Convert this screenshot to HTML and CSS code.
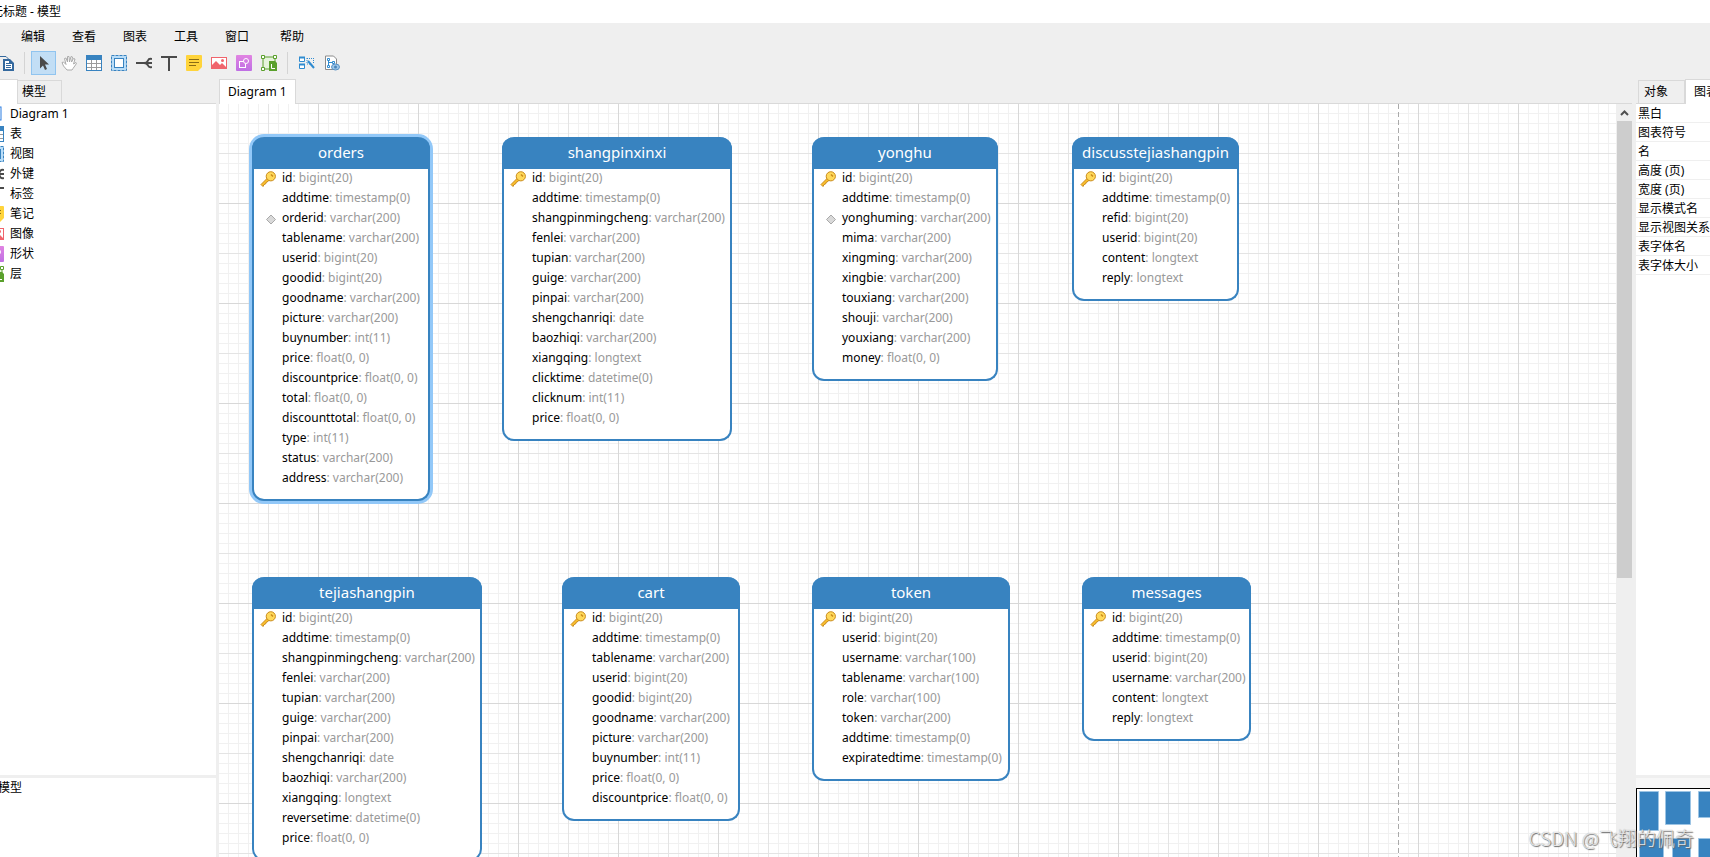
FILE: index.html
```html
<!DOCTYPE html>
<html lang="zh-CN">
<head>
<meta charset="utf-8">
<title>无标题 - 模型</title>
<link rel="stylesheet" href="styles.css">
</head>
<body>
<svg class="defs" aria-hidden="true">
  <defs>
    <linearGradient id="violet" x2="0" y2="1"><stop stop-color="#e184e2"/><stop offset="1" stop-color="#bf6fe4"/></linearGradient>
    <symbol id="i-copy" viewBox="0 0 16 16"><path d="M0 1.500h8l3 3" fill="none" stroke="#34699e"/><path d="M5 4h7l4 4v8H5z" fill="#34699e"/><path d="M7 6h4v3h3v5H7z" fill="#fff"/><path d="M8 8.500h3M8 10.500h5M8 12.500h5" stroke="#34699e"/></symbol>
    <symbol id="i-arrow" viewBox="0 0 16 16"><path d="M4 1l9 8.500H9l2 4.500-2 1-2-4.500-3 3z" fill="#4a4a4a"/></symbol>
    <symbol id="i-hand" viewBox="0 0 16 16"><path d="M6 15L2.500 11 1 7.500l1.500-.5L5 9.500 3.500 3.500 5 3l1.500 4L6.500 1.500H8L8.500 7 10 1.500l1.500.5L10.500 7l2-3.500 1.500.5-1.500 5L15 7.500l.5 1-3.500 5-1 1.500z" fill="#fff" stroke="#ababab"/></symbol>
    <symbol id="i-table" viewBox="0 0 16 16"><rect x=".5" y=".5" width="15" height="15" fill="#fff" stroke="#3883c0"/><path d="M0 0h16v5H0z" fill="#3883c0"/><path d="M5.500 5v10M10.500 5v10M1 8.500h14M1 12.500h14" stroke="#9b9b9b"/></symbol>
    <symbol id="i-view" viewBox="0 0 16 16"><rect x=".5" y=".5" width="15" height="15" fill="#b9ddf8" stroke="#3883c0" stroke-dasharray="3 1"/><rect x="3.500" y="3.500" width="9" height="9" fill="#fff" stroke="#3883c0"/></symbol>
    <symbol id="i-key" viewBox="0 0 16 16"><path d="M0 8h16M8 8q3 0 4-2.500T16 4M8 8q3 0 4 2.500T16 12" fill="none" stroke="#4a4a4a" stroke-width="2"/></symbol>
    <symbol id="i-text" viewBox="0 0 16 16"><path d="M0 2h16M8 1v15" stroke="#4a4a4a" stroke-width="2"/></symbol>
    <symbol id="i-note" viewBox="0 0 16 16"><path d="M1 0h14q1 0 1 1v11l-4 4H1q-1 0-1-1V1q0-1 1-1z" fill="#ffd43b"/><path d="M3 4.500h10M3 7.500h10M3 10.500h7" stroke="#8a6c15"/></symbol>
    <symbol id="i-image" viewBox="0 0 16 16"><rect x=".5" y="2.500" width="15" height="11" fill="#fff" stroke="#f0646c"/><path d="M1 13V10l4-4 4 4 2-2 4 4v1z" fill="#f0646c"/><circle cx="11.500" cy="5.500" r="1.500" fill="#f0646c"/></symbol>
    <symbol id="i-shape" viewBox="0 0 16 16"><rect width="16" height="16" rx="1" fill="url(#violet)"/><rect x="3.500" y="6.500" width="6" height="6" fill="none" stroke="#fff"/><circle cx="10" cy="6" r="2.500" fill="#d27be3" stroke="#fff"/></symbol>
    <symbol id="i-layer" viewBox="0 0 16 16"><path d="M2 2h12v12H2z" fill="#e6f3dc" stroke="#5aa02c"/><path d="M.5.5h3v3h-3zM12.500.5h3v3h-3zM.5 12.500h3v3h-3z" fill="#fff" stroke="#5aa02c"/><path d="M8 6h6l2 2v8H8z" fill="#5aa02c"/><path d="M10.500 9v4.500H14" fill="none" stroke="#fff"/></symbol>
    <symbol id="i-auto" viewBox="0 0 16 16"><path d="M.5 2.500h5v4h-5zM.5 9.500h5v4h-5z" fill="#fff" stroke="#2f8bd0"/><path d="M0 2.500h6M0 9.500h6" stroke="#2f8bd0" stroke-width="2"/><path d="M8 3.500h7M8 3v6M14.500 3v6M8 9h3" stroke="#2f8bd0" fill="none" stroke-dasharray="1 1"/><path d="M9 6l6 7" stroke="#2f8bd0" stroke-width="2"/></symbol>
    <symbol id="i-report" viewBox="0 0 16 16"><path d="M1.500 1h8l3 3v10.500h-11z" fill="#fff" stroke="#8b8b8b"/><path d="M3.500 3.500h2v2h-2zM3.500 10.500h2v2h-2zM8.500 6.500h2v2h-2zM4.500 5.500v5M4.500 7.500h4" fill="none" stroke="#2f8bd0"/><ellipse cx="11.500" cy="12" rx="4" ry="3" fill="#9cc7ea" stroke="#5b93c4"/><circle cx="11.500" cy="12" r="1.500" fill="#4b86bb"/></symbol>
    <symbol id="i-diagram" viewBox="0 0 16 16"><rect x="1" y="1" width="12" height="13" fill="#fff" stroke="#2a7de1"/></symbol>
    <symbol id="i-pk" viewBox="0 0 16 16"><path d="M1 13.500L7.500 7l2 2L8 10.500 6.500 11 5.500 13 4 13.500 3 15.500z" fill="#fbc02d" stroke="#c98a1b"/><circle cx="10.800" cy="5.300" r="4.600" fill="#ffd95a" stroke="#c98a1b"/><path d="M11 3.500l2 2" stroke="#c98a1b" stroke-width="1.500"/></symbol>
    <symbol id="i-index" viewBox="0 0 16 16"><path d="M11 4l4.500 4.500L11 13 6.500 8.500z" fill="#d9d9d9" stroke="#a9a9a9"/></symbol>
  </defs>
</svg>
<div class="app">
  <header class="title-bar">无标题 - 模型</header>
  <nav class="menu-bar" id="menus"></nav>
  <div class="tool-bar" id="tools"></div>
  <main class="workspace">
    <aside class="side">
      <div class="tabs"><button class="tab active" aria-label="图表"></button><button class="tab model">模型</button></div>
      <ul class="tree" id="tree"></ul>
      <div class="side-info">模型</div>
    </aside>
    <section class="center">
      <div class="tabs"><button class="tab active">Diagram 1</button></div>
      <div class="canvas-row">
        <div class="canvas" id="canvas"><div class="page-edge"></div></div>
        <div class="scrollbar"><button class="scroll-up" aria-label="Scroll up"><svg viewBox="0 0 15 17"><path d="M4 11l3.500-3.500L11 11" fill="none" stroke="#505050" stroke-width="2"/></svg></button><div class="thumb"></div></div>
      </div>
    </section>
    <aside class="props">
      <div class="tabs"><button class="tab">对象</button><button class="tab active">图表</button></div>
      <ul class="prop-list">
        <li>黑白</li><li>图表符号</li><li>名</li><li>高度 (页)</li><li>宽度 (页)</li><li>显示模式名</li><li>显示视图关系</li><li>表字体名</li><li>表字体大小</li>
      </ul>
      <div class="overview-pane"><div class="overview">
        <svg width="100" height="80"><g fill="#3883c0" stroke="#9cc4e4"><path d="M2.500 2.500h19v39h-19zM28.500 2.500h25v33h-25zM61.500 2.500h20v26h-20zM2.500 49.500h24v30h-24zM35.500 49.500h18v30h-18zM61.500 49.500h20v30h-20z"/></g></svg>
      </div></div>
    </aside>
  </main>
  <div class="watermark">CSDN @飞翔的佩奇</div>
</div>
<script src="app.js"></script>
</body>
</html>
```
FILE: styles.css
```css
* { box-sizing: border-box; }
body {
  margin: 0;
  background: #efefef;
  color: #000;
  font: 12px/20px "Noto Sans", "Noto Sans CJK SC", sans-serif;
}
button { font: inherit; color: inherit; border: 0; background: none; padding: 0; }
ul { list-style: none; margin: 0; padding: 0; }
svg { display: block; }
.defs { position: absolute; width: 0; height: 0; }
.app { height: 100vh; display: flex; flex-direction: column; overflow: hidden; position: relative; }
.title-bar { height: 23px; background: #fff; line-height: 23px; text-indent: -9px; white-space: nowrap; }
.menu-bar { height: 27px; padding-left: 21px; display: flex; align-items: center; gap: 27px; }
.menu-bar button:last-child { margin-left: 4px; }
.tool-bar { height: 29px; padding-top: 1px; display: flex; align-items: flex-start; overflow: hidden; }
.tool { width: 25px; height: 24px; flex: none; display: grid; place-items: center; }
.tool svg, .tree svg { width: 16px; height: 16px; }
.tool.first { margin-left: -7px; }
.tool.selected { background: #c2def5; border: 1px solid #90c4ef; }
.sep { width: 1px; height: 22px; background: #d4d4d4; margin: 1px 6px; flex: none; }
.workspace { flex: 1; min-height: 0; display: flex; }
.tabs { height: 25px; display: flex; align-items: flex-end; border-bottom: 1px solid #d9d9d9; flex: none; }
.tab { height: 23px; line-height: 22px; padding: 0 16px 0 5px; border: 1px solid #d9d9d9; border-bottom: 0; flex: none; white-space: nowrap; }
.tab.active { height: 25px; line-height: 20px; background: #fff; padding: 0 8px; margin-bottom: -1px; }
.side { width: 216px; flex: none; display: flex; flex-direction: column; }
.side .tab.active { width: 18px; border-left: 0; }
.side .tab.model { border-left: 0; padding: 0 15px 0 4px; }
.tree { flex: 1; background: #fff; }
.tree li { display: flex; gap: 6px; height: 20px; align-items: center; margin-left: -12px; }
.side-info { height: 79px; flex: none; margin-top: 3px; background: #fff; text-indent: -2px; }
.center { flex: 1; min-width: 0; margin-left: 3px; display: flex; flex-direction: column; }
.center .tabs { margin-right: 1px; }
.canvas-row { flex: 1; min-height: 0; display: flex; gap: 1px; }
.canvas {
  flex: 1; position: relative; overflow: hidden; background-color: #fff;
  background-image:
    linear-gradient(90deg, #d8d8d8 1px, transparent 1px), linear-gradient(#d8d8d8 1px, transparent 1px),
    linear-gradient(90deg, #e4e4e4 1px, transparent 1px), linear-gradient(#e4e4e4 1px, transparent 1px),
    linear-gradient(90deg, #f1f1f1 1px, transparent 1px), linear-gradient(#f1f1f1 1px, transparent 1px);
  background-size: 100px 100px, 100px 100px, 50px 50px, 50px 50px, 10px 10px, 10px 10px;
  background-position: 99px 99px;
}
.page-edge {
  position: absolute; top: 0; bottom: 0; left: 1179px; width: 1px;
  background: repeating-linear-gradient(#aaa 0 5px, #fff 5px 8px);
}
.entity {
  position: absolute; background: #fff; border: 2px solid #3883c0; border-top: 0;
  border-radius: 12px; padding-bottom: 10px; white-space: nowrap;
}
.entity.selected { box-shadow: 0 0 0 3px #92c8f8; }
.entity h2 {
  margin: 0 -2px; height: 32px; line-height: 31px; text-align: center; font-size: 15px; font-weight: 400;
  color: #fff; background: #3883c0; border-radius: 12px 12px 0 0;
}
.field { display: flex; height: 20px; line-height: 18px; }
.field svg { width: 16px; height: 16px; margin: 2px 6px 0; flex: none; }
.field .type { color: #999; white-space: pre; }
.scrollbar { width: 15px; flex: none; background: #efefef; margin-right: 1px; }
.scroll-up { display: block; width: 15px; height: 17px; }
.thumb { height: 457px; background: #cdcdcd; }
.props { width: 74px; flex: none; margin-left: 3px; overflow: hidden; display: flex; flex-direction: column; }
.props .tabs { padding-left: 2px; }
.prop-list { flex: 1; background: #fff; white-space: nowrap; }
.prop-list li { height: 19px; line-height: 20px; padding-left: 2px; border-bottom: 1px solid #efefef; }
.overview-pane { flex: none; margin-top: 3px; padding-top: 10px; background: #f7f7f7; }
.overview { height: 69px; background: #fff; border: 1px solid #000; border-width: 1px 0 0 1px; overflow: hidden; }
.watermark {
  position: absolute; right: 16px; bottom: 7px; font: 19px/24px "Noto Sans CJK SC", sans-serif; font-weight: 300;
  color: #fffc; text-shadow: 1px 1px 1px #666, 0 0 1px #888;
}
```
FILE: app.js
```js
const icon = name => `<svg><use href="#i-${name}"/></svg>`;

document.getElementById("menus").innerHTML =
  ["编辑", "查看", "图表", "工具", "窗口", "帮助"].map(m => `<button>${m}</button>`).join("");

document.getElementById("tools").innerHTML =
  ["copy", "|", "arrow", "hand", "table", "view", "key", "text", "note", "image", "shape", "layer", "|", "auto", "report"]
    .map(t => t === "|" ? '<span class="sep"></span>'
      : `<button class="tool ${t === "copy" ? "first" : t === "arrow" ? "selected" : ""}" aria-label="${t}">${icon(t)}</button>`).join("");

document.getElementById("tree").innerHTML =
  [["diagram", "Diagram 1"], ["table", "表"], ["view", "视图"], ["key", "外键"], ["text", "标签"],
   ["note", "笔记"], ["image", "图像"], ["shape", "形状"], ["layer", "层"]]
    .map(([i, t]) => `<li>${icon(i)}<span>${t}</span></li>`).join("");

const v = "varchar(200)", big = "bigint(20)", ts = "timestamp(0)", fl = "float(0, 0)", lt = "longtext", int = "int(11)";
const entities = [
  { name: "orders", x: 33, y: 33, w: 178, selected: true, index: "orderid", fields: [["id", big], ["addtime", ts], ["orderid", v], ["tablename", v], ["userid", big], ["goodid", big], ["goodname", v], ["picture", v], ["buynumber", int], ["price", fl], ["discountprice", fl], ["total", fl], ["discounttotal", fl], ["type", int], ["status", v], ["address", v]] },
  { name: "shangpinxinxi", x: 283, y: 33, w: 230, fields: [["id", big], ["addtime", ts], ["shangpinmingcheng", v], ["fenlei", v], ["tupian", v], ["guige", v], ["pinpai", v], ["shengchanriqi", "date"], ["baozhiqi", v], ["xiangqing", lt], ["clicktime", "datetime(0)"], ["clicknum", int], ["price", fl]] },
  { name: "yonghu", x: 593, y: 33, w: 186, index: "yonghuming", fields: [["id", big], ["addtime", ts], ["yonghuming", v], ["mima", v], ["xingming", v], ["xingbie", v], ["touxiang", v], ["shouji", v], ["youxiang", v], ["money", fl]] },
  { name: "discusstejiashangpin", x: 853, y: 33, w: 167, fields: [["id", big], ["addtime", ts], ["refid", big], ["userid", big], ["content", lt], ["reply", lt]] },
  { name: "tejiashangpin", x: 33, y: 473, w: 230, fields: [["id", big], ["addtime", ts], ["shangpinmingcheng", v], ["fenlei", v], ["tupian", v], ["guige", v], ["pinpai", v], ["shengchanriqi", "date"], ["baozhiqi", v], ["xiangqing", lt], ["reversetime", "datetime(0)"], ["price", fl]] },
  { name: "cart", x: 343, y: 473, w: 178, fields: [["id", big], ["addtime", ts], ["tablename", v], ["userid", big], ["goodid", big], ["goodname", v], ["picture", v], ["buynumber", int], ["price", fl], ["discountprice", fl]] },
  { name: "token", x: 593, y: 473, w: 198, fields: [["id", big], ["userid", big], ["username", "varchar(100)"], ["tablename", "varchar(100)"], ["role", "varchar(100)"], ["token", v], ["addtime", ts], ["expiratedtime", ts]] },
  { name: "messages", x: 863, y: 473, w: 169, fields: [["id", big], ["addtime", ts], ["userid", big], ["username", v], ["content", lt], ["reply", lt]] }
];
document.getElementById("canvas").insertAdjacentHTML("beforeend", entities.map(e =>
  `<article class="entity${e.selected ? " selected" : ""}" style="left:${e.x}px;top:${e.y}px;width:${e.w}px"><h2>${e.name}</h2>` +
  e.fields.map(([n, t]) =>
    `<div class="field">${n === "id" ? icon("pk") : n === e.index ? icon("index") : "<svg></svg>"}<span>${n}</span><span class="type">: ${t}</span></div>`).join("") +
  "</article>").join(""));
```
